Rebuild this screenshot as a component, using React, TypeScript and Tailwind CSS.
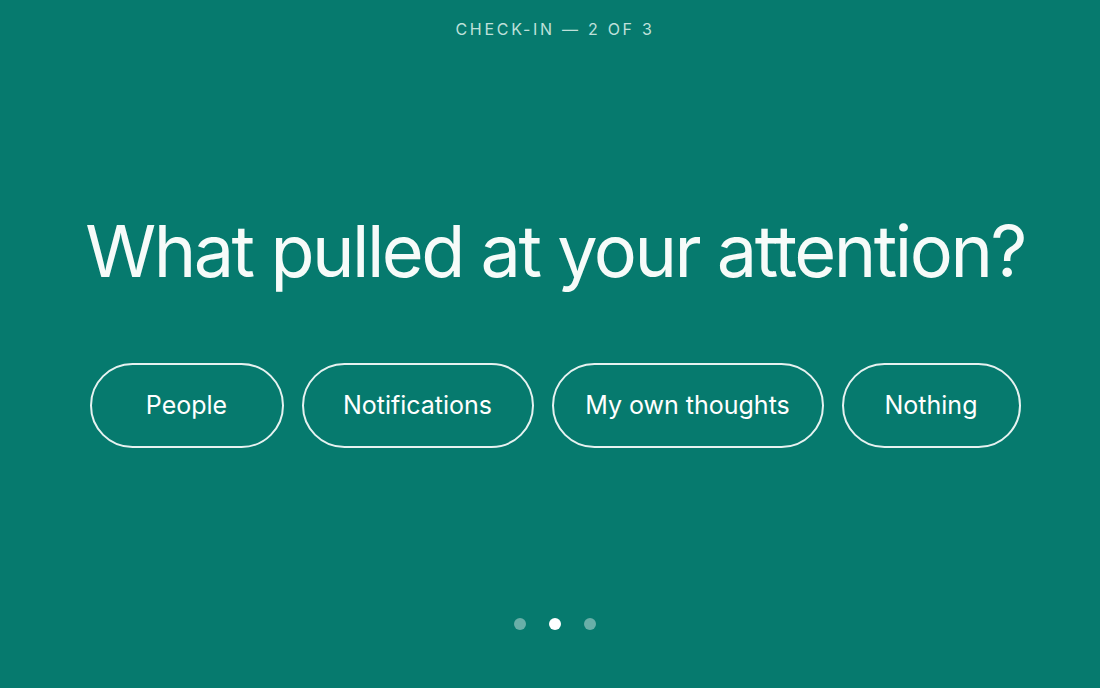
const OPTIONS = [
  { label: 'People', width: 'w-[194px]' },
  { label: 'Notifications', width: 'w-[232px]' },
  { label: 'My own thoughts', width: 'w-[272px]' },
  { label: 'Nothing', width: 'w-[179px]' },
]

export default function App() {
  return (
    <div className="flex h-[688px] w-full flex-col items-center bg-[#067a6e] pl-[10px] font-['Inter',sans-serif] text-white">
      <p className="mt-[19px] text-[16px] leading-5 tracking-[0.17em] text-[#bfe0da]">
        CHECK-IN — 2 OF 3
      </p>

      <h1 className="mt-[172px] text-[72px] leading-[80px] font-normal tracking-[-0.035em] text-[#f6fbf9]">
        What pulled at your attention?
      </h1>

      <div className="mt-[72px] flex gap-[18px]">
        {OPTIONS.map((o) => (
          <button
            key={o.label}
            className={`${o.width} h-[85px] rounded-full border-2 border-white/90 text-[25px] text-white`}
          >
            {o.label}
          </button>
        ))}
      </div>

      <div className="mt-auto mb-[58px] flex items-center gap-[23px]">
        <span className="h-[12px] w-[12px] rounded-full bg-white/40" />
        <span className="h-[12px] w-[12px] rounded-full bg-white" />
        <span className="h-[12px] w-[12px] rounded-full bg-white/40" />
      </div>
    </div>
  )
}
